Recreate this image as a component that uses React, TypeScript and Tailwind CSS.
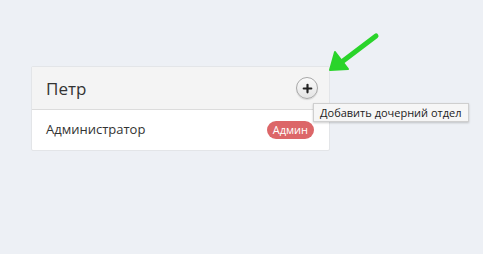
import { Plus } from 'lucide-react';

export default function App() {
    return (
        <div className="relative w-[483px] h-[254px] bg-[#edf0f5] overflow-hidden" style={{ fontFamily: '"Open Sans", "Liberation Sans", sans-serif' }}>
            <div className="pt-[66px] pl-[31px]">
                <div className="w-[299px] bg-white border border-[#e3e5e8] rounded-[2px]">
                    <div className="h-[43px] bg-[#f4f4f4] border-b border-[#dcdcdc] flex items-center justify-between pl-[14px] pr-[11px]">
                        <span className="text-[17px] text-[#333] leading-none">Петр</span>
                        <button className="w-[22px] h-[22px] rounded-full border border-[#a8a8a8] bg-gradient-to-b from-[#fbfbfb] to-[#e4e4e4] flex items-center justify-center shadow-[0_1px_1px_rgba(0,0,0,0.12)]">
                            <Plus size={13} strokeWidth={4} className="text-[#222]" />
                        </button>
                    </div>
                    <div className="h-[40px] flex items-center justify-between pl-[14px] pr-[15px]">
                        <span className="text-[13px] text-[#333]">Администратор</span>
                        <span className="h-[18px] px-[6px] rounded-full bg-[#dc6668] text-white text-[11px] leading-[18px]">Админ</span>
                    </div>
                </div>
            </div>

            <div className="absolute left-[313px] top-[103px] h-[19px] px-[6px] bg-[#f6f6f6] border border-[#cfcfcf] shadow-[0_1px_2px_rgba(0,0,0,0.2)] text-[11px] text-[#222] leading-[17px] whitespace-nowrap">
                Добавить дочерний отдел
            </div>

            <svg className="absolute left-0 top-0" width="483" height="254" viewBox="0 0 483 254">
                <line x1="376" y1="36" x2="343" y2="61" stroke="#2ad42a" strokeWidth="5" strokeLinecap="round" />
                <polygon points="330,70 335,52 348,69" fill="#2ad42a" stroke="#2ad42a" strokeWidth="2" strokeLinejoin="round" />
            </svg>
        </div>
    );
}
